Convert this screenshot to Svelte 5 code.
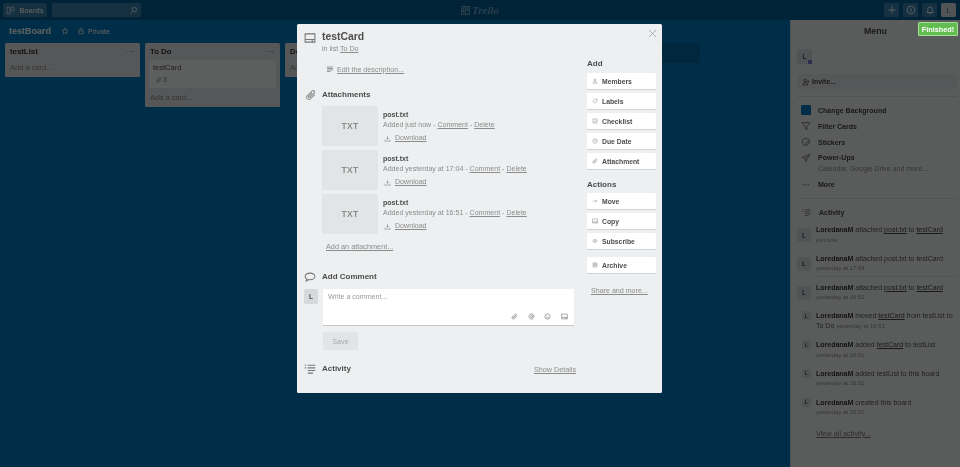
<script>
  const paths = {
    board: 'M2 2h5v12H2zM9 2h5v7H9z',
    search: 'M9.5 2.5a4 4 0 1 1 0 8a4 4 0 0 1 0-8zM6.8 9.4L2.5 13.7',
    star: 'M8 2.2l1.8 3.8 4.1.5-3 2.9.8 4.1L8 11.5l-3.7 2 .8-4.1-3-2.9 4.1-.5z',
    lock: 'M3.5 7.5h9v6h-9zM5.5 7.5V5a2.5 2.5 0 0 1 5 0v2.5',
    card: 'M1.5 2.5h13v11h-13zM1.5 10h13M11 10v3.5',
    desc: 'M2 4h12M2 7h12M2 10h12M2 13h7',
    clip: 'M13 7.5l-5.5 5.5a3 3 0 0 1-4.3-4.3l6-6a2 2 0 0 1 2.9 2.9l-5.6 5.6a1 1 0 0 1-1.5-1.5l4.6-4.6',
    down: 'M8 2v7.5M5 7l3 3 3-3M2 11v3h12v-3',
    bubble: 'M8 2.8c3.6 0 6.5 1.9 6.5 4.4s-2.9 4.4-6.5 4.4c-.7 0-1.4-.1-2-.2l-3 2 .6-2.9C2.3 9.7 1.500 8.500 1.500 7.200c0-2.500 2.900-4.400 6.500-4.400z',
    activity: 'M5 3h10M5 6.500h10M5 10h10M5 13.500h7M1 3h2M1 6.500h2',
    at: 'M10.500 8a2.500 2.500 0 1 1-5 0a2.500 2.500 0 0 1 5 0zM10.500 5.500V9a1.800 1.800 0 0 0 3.500 0V8a6 6 0 1 0-2.400 4.800',
    smile: 'M8 2a6 6 0 1 1 0 12A6 6 0 0 1 8 2zM5.500 6.500v1M10.500 6.500v1M5 10c1.500 1.700 4.500 1.700 6 0',
    person: 'M8 2.500a2.500 2.500 0 1 1 0 5a2.500 2.500 0 0 1 0-5zM3 14v-2.500l2.500-2h5l2.500 2V14z',
    label: 'M2.500 9.500l6-6.500h5v5l-6 6z',
    check: 'M2.500 2.500h11v11h-11zM5 8l2.500 2.500L13 5',
    clock: 'M8 2a6 6 0 1 1 0 12A6 6 0 0 1 8 2zM8 4.500V8h3.500',
    arrow: 'M2 8h11M9.500 4.500L13 8l-3.500 3.500',
    eye: 'M1.500 8C3.300 5.300 5.500 4 8 4s4.700 1.300 6.500 4c-1.800 2.700-4 4-6.500 4s-4.700-1.300-6.500-4zM8 6.500a1.500 1.500 0 1 1 0 3a1.500 1.500 0 0 1 0-3z',
    archive: 'M3 2.500h10v11H3zM3 6h10M3 9.500h10M6.500 4.300h3M6.500 7.800h3',
    plus: 'M8 2v12M2 8h12',
    info: 'M8 1.800a6.200 6.200 0 1 1 0 12.400A6.200 6.200 0 0 1 8 1.800zM8 5v6',
    bell: 'M3 12h10l-1.500-2V6.500a3.500 3.500 0 0 0-7 0V10zM6.500 14h3',
    invite: 'M6.500 2.500a2.500 2.500 0 1 1 0 5a2.500 2.500 0 0 1 0-5zM2 14v-2.500l2-2h5l2 2V14zM12.500 5v4M10.500 7h4',
    filter: 'M1.500 2.500h13L9.500 8.500v5.500l-3-2V8.500z',
    sticker: 'M8 2a6 6 0 0 1 6 6l-6 6a6 6 0 0 1 0-12zM14 8H10a2 2 0 0 0-2 2v4',
    plane: 'M14 2L2 7l4.500 2 1 5zM6.500 9L14 2',
    close: 'M3 3l10 10M13 3L3 13'
  };

  const lists = [
    { name: 'testList', cards: [] },
    { name: 'To Do', cards: [{ title: 'testCard', count: 3 }] },
    { name: 'Doing', cards: [] },
    { name: 'Done', cards: [] }
  ];

  const attachments = [
    'Added just now',
    'Added yesterday at 17:04',
    'Added yesterday at 16:51'
  ];

  const addButtons = [
    ['person', 'Members'],
    ['label', 'Labels'],
    ['check', 'Checklist'],
    ['clock', 'Due Date'],
    ['clip', 'Attachment']
  ];
  const actionButtons = [
    ['arrow', 'Move'],
    ['card', 'Copy'],
    ['eye', 'Subscribe']
  ];

  const feed = [
    { parts: [[' attached '], ['post.txt', 1], [' to '], ['testCard', 1]], time: 'just now' },
    { sep: true, parts: [[' attached post.txt to testCard']], time: 'yesterday at 17:04' },
    { parts: [[' attached '], ['post.txt', 1], [' to '], ['testCard', 1]], time: 'yesterday at 16:51' },
    { small: true, inline: true, parts: [[' moved '], ['testCard', 1], [' from testList to To Do']], time: 'yesterday at 16:51' },
    { small: true, parts: [[' added '], ['testCard', 1], [' to testList']], time: 'yesterday at 16:51' },
    { small: true, parts: [[' added testList to this board']], time: 'yesterday at 16:51' },
    { small: true, parts: [[' created this board']], time: 'yesterday at 16:51' }
  ];
</script>

{#snippet icon(name, size, cls = '')}
  <svg class="icon {cls}" width={size} height={size} viewBox="0 0 16 16" fill="none" stroke="currentColor" stroke-width="1.4" aria-hidden="true"><path d={paths[name]} /></svg>
{/snippet}

<div class="page">
  <header class="topbar">
    <div class="hbtn boards">{@render icon('board', 9)}<span>Boards</span></div>
    <div class="hbtn searchbox">{@render icon('search', 9)}</div>
    <div class="logo"><svg width="9" height="9" viewBox="0 0 16 16" fill="none" stroke="currentColor" stroke-width="2"><rect x="1" y="1" width="14" height="14" /><path d="M8 1v14" fill="none" /><rect x="3" y="3" width="3" height="9" fill="currentColor" stroke="none" /><rect x="10" y="3" width="3" height="6" fill="currentColor" stroke="none" /></svg><span>Trello</span></div>
    <div class="hright">
      <div class="hbtn sq">{@render icon('plus', 10)}</div>
      <div class="hbtn sq">{@render icon('info', 10)}</div>
      <div class="hbtn sq">{@render icon('bell', 10)}</div>
      <div class="hbtn sq me">L</div>
    </div>
  </header>

  <div class="body">
    <section class="board">
      <div class="boardhead">
        <h1>testBoard</h1>
        {@render icon('star', 8)}
        {@render icon('lock', 8)}
        <span>Private</span>
      </div>
      <div class="lists">
        {#each lists as list}
          <div class="list">
            <div class="listhead"><b>{list.name}</b><span class="dots">···</span></div>
            {#each list.cards as c}
              <div class="tcard">
                <div>{c.title}</div>
                <div class="badge">{@render icon('clip', 6)}<span>{c.count}</span></div>
              </div>
            {/each}
            <div class="addcard">Add a card...</div>
          </div>
        {/each}
        <div class="addlist"></div>
      </div>
    </section>

    <aside class="menu">
      <div class="menuhead">Menu</div>
      <div class="menuinner">
        <div class="av big">L<i class="mark"></i></div>
        <div class="invite">{@render icon('invite', 8)}<span>Invite...</span></div>
        <ul class="mitems">
          <li><i class="swatch"></i><b>Change Background</b></li>
          <li>{@render icon('filter', 10)}<b>Filter Cards</b></li>
          <li>{@render icon('sticker', 10)}<b>Stickers</b></li>
          <li class="pu">{@render icon('plane', 10)}<b>Power-Ups</b></li>
          <li class="pusub">Calendar, Google Drive and more...</li>
          <li class="more"><span class="mdots">···</span><b>More</b></li>
        </ul>
        <div class="mact">{@render icon('activity', 9)}<b>Activity</b></div>
        <div class="feed">
          {#each feed as f}
            <div class="fitem" class:sep={f.sep}>
              <div class="favwrap"><div class="av" class:tiny={f.small}>L</div></div>
              <div class="ftext">
                <p><b>LoredanaM</b>{#each f.parts as p}{#if p[1]}<u>{p[0]}</u>{:else}{p[0]}{/if}{/each}{#if f.inline}&nbsp;<small>{f.time}</small>{/if}</p>
                {#if !f.inline}<small>{f.time}</small>{/if}
              </div>
            </div>
          {/each}
        </div>
        <div class="viewall">View all activity...</div>
      </div>
    </aside>
  </div>

  <div class="overlay"></div>

  <div class="finished">Finished!</div>

  <div class="modal">
    <span class="x">{@render icon('close', 11)}</span>
    <div class="main">
      <div class="mhead">
        <span class="ic">{@render icon('card', 12)}</span>
        <div>
          <h2>testCard</h2>
          <div class="inlist">in list <u>To Do</u></div>
        </div>
      </div>
      <div class="edit">{@render icon('desc', 8)}<u>Edit the description...</u></div>

      <h3 class="sect attach"><span class="ic clipic">{@render icon('clip', 12)}</span>Attachments</h3>
      <div class="atts">
        {#each attachments as a}
          <div class="att">
            <div class="thumb">TXT</div>
            <div class="ainfo">
              <b>post.txt</b>
              <div class="meta">{a} - <u>Comment</u> - <u>Delete</u></div>
              <div class="dl">{@render icon('down', 7)}<u>Download</u></div>
            </div>
          </div>
        {/each}
      </div>
      <div class="addatt"><u>Add an attachment...</u></div>

      <h3 class="sect comment"><span class="ic">{@render icon('bubble', 12)}</span>Add Comment</h3>
      <div class="cmt">
        <div class="av cav">L</div>
        <div class="cbox">
          <div class="ph">Write a comment...</div>
          <div class="cicons">
            {@render icon('clip', 7)}{@render icon('at', 7)}{@render icon('smile', 7)}{@render icon('card', 7)}
          </div>
        </div>
      </div>
      <div class="save">Save</div>

      <div class="acthead">
        <h3 class="sect"><span class="ic">{@render icon('activity', 12)}</span>Activity</h3>
        <u>Show Details</u>
      </div>
    </div>

    <div class="side">
      <h4>Add</h4>
      {#each addButtons as b}
        <div class="sbtn">{@render icon(b[0], 6)}<span>{b[1]}</span></div>
      {/each}
      <h4 class="acts">Actions</h4>
      {#each actionButtons as b}
        <div class="sbtn">{@render icon(b[0], 6)}<span>{b[1]}</span></div>
      {/each}
      <div class="sbtn arch">{@render icon('archive', 6)}<span>Archive</span></div>
      <div class="share"><u>Share and more...</u></div>
    </div>
  </div>
</div>

<style>
  :global(body) { margin: 0; }
  * { box-sizing: border-box; }
  .page {
    position: relative;
    width: 960px; height: 467px;
    overflow: hidden;
    display: flex; flex-direction: column;
    background: #0079bf;
    font-family: "Liberation Sans", Arial, sans-serif;
    color: #4d4d4d;
    font-size: 7.5px;
    filter: blur(.3px);
  }
  .icon { display: block; flex: none; }
  h1, h2, h3, h4, p, ul { margin: 0; padding: 0; font-weight: 700; }
  u { text-decoration: underline; }

  .topbar {
    height: 20px; flex: none;
    display: flex; align-items: center; gap: 5px;
    padding: 0 4px 0 3px;
    background: #015c93;
    position: relative;
    color: #fff;
  }
  .hbtn {
    height: 14px; border-radius: 1.500px;
    background: rgba(255,255,255,.22);
    display: flex; align-items: center; justify-content: center;
  }
  .boards { width: 44px; gap: 4px; font-weight: 700; font-size: 7px; color: #dfe9f0; }
  .searchbox { width: 89px; justify-content: flex-end; padding-right: 3px; }
  .hright { margin-left: auto; display: flex; gap: 4px; }
  .sq { width: 15px; }
  .me { background: #d6dadc; color: #4d4d4d; font-size: 6.500px; }
  .logo {
    position: absolute; left: 461px; top: 2px; height: 16px;
    display: flex; align-items: center; gap: 2px;
    color: rgba(255,255,255,.42);
    font: italic 700 11px "Liberation Serif", serif;
  }

  .body { flex: 1; display: flex; min-height: 0; }
  .board { flex: 1; min-width: 0; overflow: hidden; }
  .boardhead {
    height: 23px; display: flex; align-items: center;
    padding: 0 0 1px 9px; color: #fff;
    font-size: 7px;
  }
  .boardhead h1 { font-size: 9px; width: 52px; color: #fff; }
  .boardhead :global(.icon:nth-of-type(1)) { margin: 0 8px 0 0; }
  .boardhead :global(.icon:nth-of-type(2)) { margin-right: 3px; }
  .lists { display: flex; gap: 5px; padding-left: 5px; align-items: flex-start; }
  .list {
    width: 135px; flex: none;
    background: #e2e4e6; border-radius: 1.500px;
    padding: 0 4px 0 4px;
    color: #4d4d4d;
  }
  .listhead {
    height: 17px; display: flex; justify-content: space-between; align-items: center;
    padding: 0 2px 0 1px; color: #333; font-size: 7.800px;
  }
  .dots { color: #777; font-size: 8px; letter-spacing: -.2px; }
  .tcard {
    background: #f5f6f7; border-radius: 1px;
    padding: 3px 4px; height: 28px;
    font-size: 7.500px; color: #4d4d4d;
    margin-bottom: 2px;
  }
  .badge { display: flex; align-items: center; gap: 1px; margin: 4px 0 0 3px; color: #6b808c; font-size: 7px; }
  .addcard { height: 17px; line-height: 15px; color: #8c8c8c; padding-left: 1px; font-size: 7.500px; }
  .addlist { width: 135px; height: 20px; flex: none; background: rgba(0,0,0,.15); border-radius: 1.500px; }

  .menu {
    width: 170px; flex: none;
    background: #edeff0;
    border-left: 1px solid #cfd3d5;
    color: #333;
  }
  .menuhead { height: 22px; line-height: 22px; text-align: center; font-size: 8.800px; font-weight: 700; color: #444; }
  .menuinner { padding: 7px 3px 0 6px; }
  .av {
    position: relative;
    width: 14px; height: 14px; border-radius: 1.500px; background: #d6dadc;
    color: #4d4d4d; font-weight: 700; font-size: 6.500px;
    display: flex; align-items: center; justify-content: center;
  }
  .av.big { height: 15px; width: 15px; }
  .mark { position: absolute; right: 0; bottom: 0; width: 4px; height: 4px; background: #7a6fd0; border-radius: 1px; }
  .av.tiny { width: 9px; height: 9px; font-size: 5.500px; margin: -3px 0 0 5px; }
  .invite {
    margin-top: 10px; height: 15px; background: #e2e4e6; border-radius: 1.500px;
    display: flex; align-items: center; gap: 2px; padding-left: 5px;
    font-weight: 700; color: #444; font-size: 7px;
  }
  .mitems {
    list-style: none; margin-top: 7px; padding: 5px 0 5px 4px;
    border-top: 1px solid #d6dadc; border-bottom: 1px solid #d6dadc;
  }
  .mitems li { height: 16px; display: flex; align-items: center; gap: 7px; font-size: 7px; color: #444; }
  .mitems li :global(.icon) { color: #777; }
  .mitems .pu { height: 11px; margin-top: 2px; }
  .mitems .pusub { height: 10px; padding-left: 17px; color: #8c8c8c; font-size: 7px; font-weight: 400; }
  .mitems .more { height: 18px; margin-top: 2px; }
  .swatch { width: 10px; height: 10px; display: block; background: #0079bf; border-radius: 1px; }
  .mdots { width: 10px; text-align: center; color: #777; }
  .mact { height: 26px; display: flex; align-items: center; gap: 8px; padding-left: 5px; font-size: 7px; color: #444; }
  .mact :global(.icon) { color: #777; }
  .fitem { display: flex; gap: 5px; height: 28.800px; }
  .fitem.sep { height: 23px; margin-bottom: 5.800px; }
  .fitem.sep .ftext { border-bottom: 1px solid #d6dadc; height: 23px; }
  .favwrap { width: 14px; flex: none; padding-top: 3px; }
  .ftext { flex: 1; min-width: 0; font-size: 7px; line-height: 9.500px; color: #555; }
  .ftext p { font-weight: 400; }
  .ftext b { color: #333; }
  .ftext u { color: #444; }
  small { font-size: 5.900px; line-height: 9.500px; color: #8c8c8c; display: inline-block; }
  .viewall { margin: 2px 0 0 19px; text-decoration: underline; color: #777; font-size: 7.300px; }

  .overlay { position: absolute; inset: 0; background: rgba(0,0,0,.62); }

  .finished {
    position: absolute; left: 918px; top: 22px; width: 40px; height: 14px;
    background: #61bd4f; border: 1px solid #a7dd9c; border-radius: 1px;
    color: #fff; font-weight: 700; font-size: 7.300px;
    display: flex; align-items: center; justify-content: center;
  }

  .modal {
    position: absolute; left: 297px; top: 24px; width: 365px; height: 369px;
    background: #edeff0; border-radius: 1.500px;
    display: flex; padding: 0 6px 0 8px;
    color: #8c8c8c;
  }
  .x { position: absolute; right: 4px; top: 4px; color: #a6abad; }
  .main { width: 271px; flex: none; }
  .ic { position: absolute; left: -18px; top: 50%; transform: translateY(-50%); color: #777; }
  .clipic { left: -17px; color: #8c8c8c; }
  .mhead { position: relative; margin-left: 17px; padding-top: 7px; }
  .mhead .ic { top: 14px; }
  h2 { font-size: 10.400px; line-height: 12px; color: #4d4d4d; }
  .inlist { font-size: 7.100px; line-height: 10px; margin-top: 1px; }
  .edit {
    margin: 10px 0 0 21px; height: 10px;
    display: flex; align-items: center; gap: 3px;
    font-size: 7.200px;
  }
  .edit :global(.icon) { color: #777; }
  h3.sect {
    position: relative; margin-left: 17px;
    font-size: 8px; line-height: 10px; color: #4d4d4d;
  }
  .attach { margin-top: 16px; }
  .atts { margin: 6px 0 0 17px; display: flex; flex-direction: column; gap: 4px; }
  .att { display: flex; height: 40px; gap: 5px; }
  .thumb {
    width: 56px; height: 40px; flex: none; background: #e2e4e6; border-radius: 1.500px;
    display: flex; align-items: center; justify-content: center;
    font-weight: 700; font-size: 8.500px; letter-spacing: .3px; color: #8c8c8c;
  }
  .ainfo b { display: block; font-size: 7px; line-height: 10px; color: #4d4d4d; margin-top: 4px; }
  .meta { font-size: 7.050px; line-height: 9px; }
  .dl { display: flex; align-items: center; gap: 4px; margin: 4px 0 0 1px; height: 10px; font-size: 7.100px; }
  .addatt { margin: 8px 0 0 21px; line-height: 10px; font-size: 7.300px; }
  .comment { margin-top: 20px; }
  .cmt { display: flex; gap: 5px; margin: 7px 0 0 -1px; }
  .cav { width: 14px; height: 15px; flex: none; }
  .cbox {
    width: 251px; height: 36px; background: #fff; border-radius: 1px;
    box-shadow: 0 1px 0 #c4c9cc; padding: 4px 5px;
    display: flex; flex-direction: column; justify-content: space-between;
  }
  .ph { line-height: 9px; font-size: 7.100px; color: #9a9a9a; }
  .cicons { display: flex; justify-content: flex-end; gap: 9.700px; padding: 0 1px 1px 0; color: #777; }
  .save {
    margin: 7px 0 0 18px; width: 35px; height: 18px;
    background: #e2e4e6; border-radius: 1.500px; color: #a6abad;
    display: flex; align-items: center; justify-content: center; font-size: 7.200px;
  }
  .acthead {
    margin-top: 14px; display: flex; justify-content: space-between; align-items: center;
    font-size: 7.200px; height: 10px;
  }
  .side { width: 69px; flex: none; margin-left: 11px; padding-top: 35px; }
  h4 { font-size: 8px; line-height: 10px; color: #4d4d4d; height: 14px; }
  h4.acts { margin-top: 11px; height: 13px; }
  .sbtn {
    height: 16px; margin-bottom: 4px;
    background: #fff; border-radius: 1px; box-shadow: 0 1px 0 #cfd3d5;
    display: flex; align-items: center; gap: 4px; padding-left: 5px;
    font-weight: 700; font-size: 6.800px; color: #4d4d4d;
  }
  .sbtn :global(.icon) { color: #8c8c8c; }
  .arch { margin-top: 8px; }
  .share { margin: 13px 0 0 4px; line-height: 10px; font-size: 7.100px; }
</style>
